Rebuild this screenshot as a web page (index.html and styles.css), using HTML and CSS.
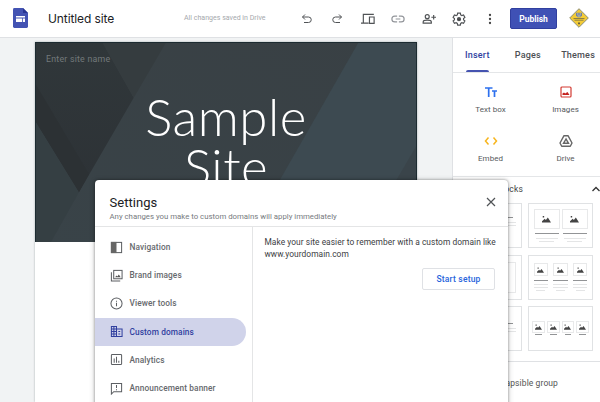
FILE: index.html
```html
<!DOCTYPE html>
<html lang="en">
<head>
<meta charset="utf-8">
<title>Untitled site</title>
<link rel="stylesheet" href="styles.css">
</head>
<body>
<svg class="defs" aria-hidden="true">
  <symbol id="pic" viewBox="0 0 10 8"><path d="M0 8V6.400L3 3.800 4.300 5.200 6.500 2.400 10 8ZM.8.6h1.600v1.600H.8Z"/></symbol>
</svg>
<header class="topbar">
  <svg class="logo" viewBox="0 0 15 20"><path d="M1.400 0H10l5 5v13.600q0 1.400-1.400 1.400H1.400Q0 20 0 18.600V1.400Q0 0 1.400 0Z" fill="#4353b3"/><path d="M10 0l5 5h-5Z" fill="#283593"/><path d="M3 8h9v1.600H3ZM3 10.400h6.200V14H3ZM10 10.400h2V14h-2Z" fill="#fff"/></svg>
  <h1 class="doc-title">Untitled site</h1>
  <span class="saved">All changes saved in Drive</span>
  <nav class="tools">
    <svg viewBox="0 0 24 24"><path d="M8 3 3 8l5 5M3 8h12a5.500 5.500 0 0 1 0 11H6"/></svg>
    <svg viewBox="0 0 24 24"><path d="M16 3l5 5-5 5M21 8H9a5.500 5.500 0 0 0 0 11h9"/></svg>
    <svg class="wide" viewBox="0 0 24 24"><path d="M22 4H4V18M0 19h13M14.500 8.500h8v11h-8Z"/></svg>
    <svg class="muted" viewBox="0 0 24 24"><path d="M10.500 7H6.500a5 5 0 0 0 0 10h4M13.500 7h4a5 5 0 0 1 0 10h-4M8 12h8"/></svg>
    <svg class="wide" viewBox="0 0 24 24"><circle cx="9" cy="8" r="3.400"/><path d="M2 19v-2c0-4 14-4 14 0v2ZM20 5v8M16 9h8"/></svg>
    <svg class="wide" viewBox="0 0 24 24"><path d="M9.700 2h4.600l.6 3 2 1.200 2.900-1 2.300 4-2.300 2v2.200l2.300 2-2.300 4-2.900-1-2 1.200-.6 3H9.700l-.6-3-2-1.200-2.900 1-2.300-4 2.300-2v-2.200l-2.300-2 2.300-4 2.900 1 2-1.200Z"/><circle cx="12" cy="12.300" r="2.600" fill="#444"/></svg>
    <svg viewBox="0 0 24 24"><g fill="#444" stroke="none"><circle cx="12" cy="4" r="2.300"/><circle cx="12" cy="12" r="2.300"/><circle cx="12" cy="20" r="2.300"/></g></svg>
  </nav>
  <button class="publish">Publish</button>
  <svg class="avatar" viewBox="0 0 20 20"><path d="M10 .7 19.300 10 10 19.300.7 10Z" fill="#f3cb36" stroke="#8b8d78"/><path d="M7 4.800h6v2.500l-1.500 2h-3L7 7.300Z" fill="#7180a0"/><path d="M8 6h1.500M10.500 6H12M8.500 8h3" stroke="#e5dfb7" stroke-width=".8"/><path d="M4.500 10.500h11M5.500 12.200h9" stroke="#8e8144" stroke-width="1"/><path d="M9.200 14.500h1.600v1.700H9.200Z" fill="#4b4938"/></svg>
</header>
<div class="workspace">
  <main class="canvas">
    <article class="page">
      <section class="banner">
        <svg class="banner-art" viewBox="0 0 381 200" preserveAspectRatio="none">
          <defs>
            <linearGradient id="g1" x1="0" y1="0" x2="0" y2="1"><stop offset="0" stop-color="#30373a"/><stop offset="1" stop-color="#2d3236"/></linearGradient>
            <linearGradient id="g2" x1="0" y1="1" x2="1" y2="0"><stop offset="0" stop-color="#394348"/><stop offset="1" stop-color="#394044"/></linearGradient>
          </defs>
          <path d="M0 0h381v200H0Z" fill="url(#g2)"/>
          <path d="M0 0h67l31 55-55 95L0 80Z" fill="url(#g1)"/>
          <path d="M0 42 53 132 43 150 0 80Z" fill="#2c3134"/>
          <path d="M67 0h63L98 55Z" fill="#353c3f"/>
          <path d="M0 80 43 150 15 200H0Z" fill="#353f43"/>
          <path d="M323 0h58v200H209Z" fill="#3d4a51"/>
          <path d="M381 104v96h-56Z" fill="#3a444a"/>
        </svg>
        <span class="site-name">Enter site name</span>
        <h2 class="banner-title">Sample<br>Site</h2>
      </section>
    </article>
  </main>
  <aside class="sidebar">
    <div class="tabs"><span class="tab tab-active">Insert</span><span class="tab">Pages</span><span class="tab">Themes</span></div>
    <div class="inserts">
      <div class="insert"><svg viewBox="0 0 14 14"><path d="M1 3h7.500M4.700 3v9M8 6h5M10.500 6v6" stroke="#2d70ee" stroke-width="1.700"/></svg>Text box</div>
      <div class="insert"><svg viewBox="0 0 14 14"><rect x="2" y="2" width="10" height="10" rx="1" stroke="#d33b32" stroke-width="1.200"/><path d="M3.500 10V8.600L5 7.500l1.200 1L8.500 7l2 3Z" fill="#c5221f"/></svg>Images</div>
      <div class="insert"><svg viewBox="0 0 14 14"><path d="M4.500 3.500 1.500 7l3 3.500M9.500 3.500l3 3.500-3 3.500" stroke="#f7b51d" stroke-width="1.500"/></svg>Embed</div>
      <div class="insert"><svg viewBox="0 0 14 14"><path d="M5 1.700h4L13 9l-1.700 3.300H2.700L1 9Z" stroke="#666" stroke-width="1.400" stroke-linejoin="round"/><path d="M7 5 4.500 9.300h5Z" stroke="#666" stroke-width="1.400"/></svg>Drive</div>
    </div>
    <div class="blocks">
      <div class="blocks-head"><span>Content blocks</span><svg viewBox="0 0 10 10"><path d="M1.500 7 5 3.500 8.500 7"/></svg></div>
      <div class="block-grid">
        <div class="block block-side"><i></i><b></b><u></u><u></u></div>
        <div class="block block-two">
          <div><span class="thumb"><svg><use href="#pic"/></svg></span><b></b><u></u><u class="short"></u></div>
          <div><span class="thumb"><svg><use href="#pic"/></svg></span><b></b><u></u><u class="short"></u></div>
        </div>
        <div class="block block-frame"><i></i></div>
        <div class="block block-three">
          <div><span class="thumb"><svg><use href="#pic"/></svg></span><b></b><u></u><u></u><u class="short"></u></div>
          <div><span class="thumb"><svg><use href="#pic"/></svg></span><b></b><u></u><u></u><u class="short"></u></div>
          <div><span class="thumb"><svg><use href="#pic"/></svg></span><b></b><u></u><u></u><u class="short"></u></div>
        </div>
        <div class="block block-side low"><i></i><b></b><u></u><u></u></div>
        <div class="block block-four">
          <div><span class="thumb"><svg><use href="#pic"/></svg></span><b></b></div>
          <div><span class="thumb"><svg><use href="#pic"/></svg></span><b></b></div>
          <div><span class="thumb"><svg><use href="#pic"/></svg></span><b></b></div>
          <div><span class="thumb"><svg><use href="#pic"/></svg></span><b></b></div>
        </div>
      </div>
    </div>
    <div class="group-row">Collapsible group</div>
  </aside>
</div>
<section class="dialog" role="dialog">
  <header class="dialog-head">
    <div><h2>Settings</h2><p>Any changes you make to custom domains will apply immediately</p></div>
    <svg class="close" viewBox="0 0 10 10"><path d="M1 1l8 8M9 1 1 9"/></svg>
  </header>
  <div class="dialog-body">
    <nav class="menu">
      <div class="item"><svg viewBox="0 0 14 14"><rect x="1.500" y="1.500" width="11" height="11"/><path d="M1 1h6v12H1Z" fill="#666" stroke="none"/></svg><span>Navigation</span></div>
      <div class="item"><svg viewBox="0 0 14 14"><rect x="4" y="1.500" width="9" height="9"/><path d="M1.500 3.500V13H11"/><path d="M5.500 9 7 7l1 1 1.500-2 2 3Z" fill="#555" stroke="none"/></svg><span>Brand images</span></div>
      <div class="item"><svg viewBox="0 0 14 14"><circle cx="7" cy="7" r="6"/><path d="M7 6.200V10M7 4v1.200"/></svg><span>Viewer tools</span></div>
      <div class="item selected"><svg viewBox="0 0 14 14"><path d="M1.500 1.500H7v11H1.500ZM7 4.200h6v8.300H7M1.500 4.400H7M1.500 7H7M1.500 9.800H7M4.200 1.500v11M9 7h2M9 9.800h2"/></svg><span>Custom domains</span></div>
      <div class="item"><svg viewBox="0 0 14 14"><rect x="1.500" y="1.500" width="11" height="11" rx="1"/><path d="M4.500 6v4.500M7 4v6.500M9.500 8.300v2.200"/></svg><span>Analytics</span></div>
      <div class="item"><svg viewBox="0 0 14 14"><path d="M1.500 13V1.500h11v9H4ZM7 3.200v3.300M7 7.700v1.200"/></svg><span>Announcement banner</span></div>
    </nav>
    <div class="content">
      <p>Make your site easier to remember with a custom domain like<br>www.yourdomain.com</p>
      <button class="setup">Start setup</button>
    </div>
  </div>
</section>
</body>
</html>
```
FILE: styles.css
```css
* { box-sizing: border-box; }
body { margin: 0; width: 600px; height: 402px; overflow: hidden; position: relative; background: #fff; color: #333; font-family: Roboto, "Liberation Sans", sans-serif; }
h1, h2, p { margin: 0; font-weight: 400; }
svg { display: block; fill: none; flex: none; }
button { font-family: inherit; padding: 0; }
.defs { position: absolute; width: 0; height: 0; }

.topbar { display: flex; align-items: center; height: 38px; padding-left: 13px; border-bottom: 1px solid #dfe1e4; }
.logo { width: 15px; height: 20px; margin-top: -1px; }
.doc-title { width: 136px; margin-left: 20px; font: 400 12px/16px Inter, sans-serif; letter-spacing: -.1px; color: #202124; white-space: nowrap; }
.saved { width: 116.500px; margin-top: -1px; font-size: 7px; letter-spacing: .02px; color: #a5a8ac; white-space: nowrap; }
.tools { display: flex; align-items: center; gap: 18.500px; width: 209.500px; margin-top: 1px; }
.tools svg { width: 12px; height: 12px; stroke: #505356; stroke-width: 2; }
.tools svg.wide { width: 14px; height: 14px; margin: 0 -1px; }
.tools .muted { width: 14px; height: 14px; margin: 0 -1px; stroke: #92959a; }
.publish { width: 47px; height: 21px; border: 1px solid #303f9f; border-radius: 2px; background: #3f51b5; color: #fff; font-size: 8.500px; font-weight: 700; }
.avatar { width: 20px; height: 20px; margin-left: 12px; margin-top: -1px; }

.workspace { display: flex; height: 364px; }
.canvas { width: 452px; padding: 4px 0 0 35px; background: #f1f3f4; }
.page { width: 382px; height: 360px; background: #fff; box-shadow: 0 0 2px #a9adb0; }
.banner { display: grid; height: 200px; overflow: hidden; color: #fff; border: 1px solid #1d2b31; border-bottom: 0; }
.banner > * { grid-area: 1 / 1; }
.banner-art { width: 100%; height: 199px; }
.site-name { padding: 11px 0 0 10px; font-size: 8.800px; letter-spacing: .22px; line-height: 10px; color: #73797b; z-index: 1; }
.banner-title { padding-top: 49px; font: 300 51px/50px Lato, sans-serif; letter-spacing: .5px; text-align: center; z-index: 1; }

.sidebar { width: 148px; border-left: 1px solid #dfe1e4; background: #fff; overflow: hidden; }
.tabs { display: flex; justify-content: space-between; height: 35px; padding: 0 5px 0 12px; border-bottom: 1px solid #e4e6e8; }
.tab { position: relative; padding-top: 11px; font-size: 9px; font-weight: 500; letter-spacing: .2px; line-height: 12px; color: #4d5054; }
.tab:nth-child(2) { margin-left: 5px; }
.tab-active { color: #303f9f; }
.tab-active::after { content: ""; position: absolute; left: 1px; right: 1px; bottom: 0; height: 2px; border-radius: 2px 2px 0 0; background: #4553b0; }
.inserts { display: grid; grid-template-columns: 75px 75px; grid-auto-rows: 48.500px; height: 104px; padding-top: 12px; border-bottom: 1px solid #e4e6e8; }
.insert { display: flex; flex-direction: column; align-items: center; gap: 6px; font-size: 8px; letter-spacing: .05px; line-height: 10px; color: #56595d; }
.insert svg { width: 14px; height: 14px; }
.blocks { height: 185px; padding-left: 4px; border-bottom: 1px solid #dfe1e4; }
.blocks-head { display: flex; justify-content: space-between; height: 26px; padding-top: 7px; font-size: 8.500px; line-height: 10px; color: #444; }
.blocks-head span { width: 66px; text-align: right; white-space: nowrap; letter-spacing: .2px; }
.blocks-head svg { width: 10px; height: 10px; margin-right: -1px; stroke: #333; stroke-width: 1.300; }
.block-grid { display: grid; grid-template-columns: 65px 65px; grid-auto-rows: 45px; gap: 6.500px 6px; }
.block { display: flex; border: 1px solid #e0e2e4; }
.block b, .block u { display: block; height: 1px; background: #929496; }
.block u { background: #e4e5e6; margin-top: 2.500px; }
.block .short { width: 60%; margin-left: auto; margin-right: auto; }
.block > div { display: flex; flex-direction: column; }
.thumb { display: flex; align-items: center; justify-content: center; border: 1px solid #e8e9ea; }
.thumb svg { width: 7px; height: 6px; fill: #444; }
.block-two { gap: 2px; padding: 5px 4.500px; }
.block-two > div { width: 26px; }
.block-two .thumb { height: 21px; }
.block-two .thumb svg { width: 9px; height: 8px; }
.block-two b { margin: 4px 1px 1px; }
.block-two u { margin-left: 2px; margin-right: 2px; }
.block-three { gap: 5.500px; padding: 7.500px 4.500px; }
.block-three > div { width: 14.500px; }
.block-three .thumb { height: 14px; margin-bottom: 4px; }
.block-three b { margin-bottom: 1px; }
.block-three u { margin-top: 2px; }
.block-four { gap: 2px; padding: 14px 3px; }
.block-four > div { width: 13px; }
.block-four .thumb { height: 14px; }
.block-four b { margin: 1px 3px; }
.block-side { flex-direction: column; padding: 13px 5px 0 35px; }
.block-side.low { padding-top: 16px; }
.block-side b { margin-right: 3px; margin-bottom: 1px; }
.block-frame { padding: 6px 5px; }
.block-frame i { flex: 1; border: 1px solid #e8e9ea; }
.group-row { width: 105px; padding-top: 14.500px; font-size: 8.500px; letter-spacing: .1px; line-height: 12px; text-align: right; color: #555; }

.dialog { position: absolute; left: 95px; top: 180px; width: 413px; height: 230px; border-radius: 4px 4px 0 0; background: #fff; box-shadow: 0 0 3px #0006, 0 1px 6px #0003; }
.dialog-head { display: flex; justify-content: space-between; height: 47px; padding: 15px 12px 0 14.500px; border-bottom: 1px solid #e4e5e6; }
.dialog-head h2 { font-size: 13px; letter-spacing: .05px; line-height: 15px; color: #202124; }
.dialog-head p { margin-top: 2px; font-size: 7.800px; letter-spacing: 0; line-height: 10px; color: #777b80; white-space: nowrap; }
.close { width: 10px; height: 10px; margin-top: 2px; stroke: #505356; stroke-width: 1.200; }
.dialog-body { display: flex; height: 183px; }
.menu { width: 158px; padding-top: 6px; border-right: 1px solid #e4e5e6; }
.item { display: flex; align-items: center; gap: 6.500px; width: 151px; height: 28.200px; padding-left: 15px; border-radius: 0 14px 14px 0; font-size: 8.300px; font-weight: 500; letter-spacing: .1px; color: #66696d; white-space: nowrap; }
.item svg { width: 13px; height: 13px; stroke: #5c5f63; stroke-width: 1.100; }
.selected { background: #d0d3ea; color: #303f9f; }
.selected svg { stroke: #303f9f; }
.content { width: 255px; padding: 9px 13px 0 11.500px; }
.content p { font-size: 8.400px; letter-spacing: .05px; line-height: 12px; color: #3c4043; white-space: nowrap; }
.setup { display: block; width: 73px; height: 22px; margin: 8px 0 0 auto; border: 1px solid #dfe1e5; border-radius: 2px; background: #fff; color: #2864dc; font-size: 8.500px; font-weight: 500; letter-spacing: .2px; }
```
